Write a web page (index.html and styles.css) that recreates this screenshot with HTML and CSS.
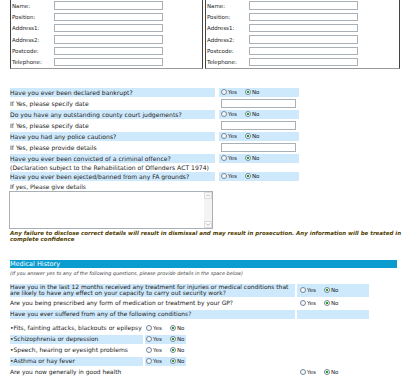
FILE: index.html
```html
<!DOCTYPE html>
<html lang="en">
<head>
    <meta charset="UTF-8">
    <meta name="viewport" content="width=device-width, initial-scale=1.0">
    <title>Steward Application</title>
    <link rel="stylesheet" href="styles.css">
</head>
<body>
    <div class="form">
        <div class="contacts">
            <div class="contact-box">
                <div class="field"><label>Name:</label><input type="text"></div>
                <div class="field"><label>Position:</label><input type="text"></div>
                <div class="field"><label>Address1:</label><input type="text"></div>
                <div class="field"><label>Address2:</label><input type="text"></div>
                <div class="field"><label>Postcode:</label><input type="text"></div>
                <div class="field"><label>Telephone:</label><input type="text"></div>
            </div>
            <div class="contact-box wide">
                <div class="field"><label>Name:</label><input type="text"></div>
                <div class="field"><label>Position:</label><input type="text"></div>
                <div class="field"><label>Address1:</label><input type="text"></div>
                <div class="field"><label>Address2:</label><input type="text"></div>
                <div class="field"><label>Postcode:</label><input type="text"></div>
                <div class="field"><label>Telephone:</label><input type="text"></div>
            </div>
        </div>

        <div class="questions">
            <div class="q shade">Have you ever been declared bankrupt?</div>
            <div class="a shade">
                <label class="choice"><input type="radio" name="bankrupt">Yes</label>
                <label class="choice"><input type="radio" name="bankrupt" checked>No</label>
            </div>
            <div class="q">If Yes, please specify date</div>
            <div class="a"><input type="text" class="short"></div>

            <div class="q shade">Do you have any outstanding county court judgements?</div>
            <div class="a shade">
                <label class="choice"><input type="radio" name="ccj">Yes</label>
                <label class="choice"><input type="radio" name="ccj" checked>No</label>
            </div>
            <div class="q">If Yes, please specify date</div>
            <div class="a"><input type="text" class="short"></div>

            <div class="q shade">Have you had any police cautions?</div>
            <div class="a shade">
                <label class="choice"><input type="radio" name="cautions">Yes</label>
                <label class="choice"><input type="radio" name="cautions" checked>No</label>
            </div>
            <div class="q">If Yes, please provide details</div>
            <div class="a"><input type="text" class="short"></div>

            <div class="q shade">Have you ever been convicted of a criminal offence?</div>
            <div class="a shade">
                <label class="choice"><input type="radio" name="convicted">Yes</label>
                <label class="choice"><input type="radio" name="convicted" checked>No</label>
            </div>
            <div class="q decl">(Declaration subject to the Rehabilitation of Offenders ACT 1974)</div>
            <div class="a decl"></div>

            <div class="q shade">Have you ever been ejected/banned from any FA grounds?</div>
            <div class="a shade">
                <label class="choice"><input type="radio" name="banned">Yes</label>
                <label class="choice"><input type="radio" name="banned" checked>No</label>
            </div>
        </div>

        <p class="details-label">If yes, Please give details</p>
        <div class="details-box">
            <textarea></textarea>
            <div class="scrollbar">
                <span class="arrow"><svg width="6" height="5" viewBox="0 0 6 5"><path d="M1 3.5 L3 1.5 L5 3.5" fill="none" stroke="#b5b5b5" stroke-width="1"/></svg></span>
                <span class="arrow"><svg width="6" height="5" viewBox="0 0 6 5"><path d="M1 1.5 L3 3.5 L5 1.5" fill="none" stroke="#b5b5b5" stroke-width="1"/></svg></span>
            </div>
        </div>

        <p class="warning">Any failure to disclose correct details will result in dismissal and may result in prosecution. Any information will be treated in complete confidence</p>

        <div class="section-head">Medical History</div>
        <p class="section-note">(If you answer yes to any of the following questions, please provide details in the space below)</p>

        <div class="medical">
            <div class="q shade">Have you in the last 12 months received any treatment for injuries or medical conditions that are likely to have any effect on your capacity to carry out security work?</div>
            <div class="a shade">
                <label class="choice"><input type="radio" name="treatment">Yes</label>
                <label class="choice"><input type="radio" name="treatment" checked>No</label>
            </div>
            <div class="q">Are you being prescribed any form of medication or treatment by your GP?</div>
            <div class="a">
                <label class="choice"><input type="radio" name="medication">Yes</label>
                <label class="choice"><input type="radio" name="medication" checked>No</label>
            </div>
            <div class="q shade">Have you ever suffered from any of the following conditions?</div>
            <div class="a shade"></div>

            <div class="conditions">
                <div class="q">&bull;Fits, fainting attacks, blackouts or epilepsy</div>
                <div class="a">
                    <label class="choice"><input type="radio" name="fits">Yes</label>
                    <label class="choice"><input type="radio" name="fits" checked>No</label>
                </div>
                <div class="q shade">&bull;Schizophrenia or depression</div>
                <div class="a shade">
                    <label class="choice"><input type="radio" name="schizo">Yes</label>
                    <label class="choice"><input type="radio" name="schizo" checked>No</label>
                </div>
                <div class="q">&bull;Speech, hearing or eyesight problems</div>
                <div class="a">
                    <label class="choice"><input type="radio" name="speech">Yes</label>
                    <label class="choice"><input type="radio" name="speech" checked>No</label>
                </div>
                <div class="q shade">&bull;Asthma or hay fever</div>
                <div class="a shade">
                    <label class="choice"><input type="radio" name="asthma">Yes</label>
                    <label class="choice"><input type="radio" name="asthma" checked>No</label>
                </div>
            </div>

            <div class="q">Are you now generally in good health</div>
            <div class="a">
                <label class="choice"><input type="radio" name="health">Yes</label>
                <label class="choice"><input type="radio" name="health" checked>No</label>
            </div>
        </div>
    </div>
</body>
</html>
```

FILE: styles.css
```css
body {
    margin: 0;
    background: #fff;
    color: #222;
    font-family: "DejaVu Sans", Verdana, sans-serif;
    font-size: 6px;
}
.form {
    padding-left: 10px;
    width: 396px;
}
input[type="text"], textarea {
    box-sizing: border-box;
    margin: 0;
    padding: 0;
    border: 1px solid #a9b0b6;
    background: #fff;
    font-size: 6px;
}

/* contact boxes */
.contacts {
    display: flex;
    gap: 2px;
    margin-top: -1px;
}
.contact-box {
    width: 193px;
    box-sizing: border-box;
    border: 1px solid #444;
    border-bottom-color: #999;
}
.contact-box.wide { width: 195px; }
.field {
    display: flex;
    align-items: center;
    height: 11.3px;
}
.field label {
    width: 43px;
    padding-left: 1px;
    box-sizing: border-box;
    font-size: 5.5px;
}
.field input {
    width: 109px;
    height: 8.5px;
}

/* question grids */
.questions {
    display: grid;
    grid-template-columns: 205px 80px;
    column-gap: 4px;
    row-gap: 2px;
    margin-top: 19px;
}
.q, .a {
    display: flex;
    align-items: center;
    min-height: 9px;
}
.q { font-size: 6.1px; }
.a { padding-left: 2px; }
.shade { background: #cfe9fc; }
.decl {
    min-height: 5px;
    height: 5px;
    line-height: 5px;
}
.short {
    width: 75px;
    height: 9px;
}
.choice {
    display: inline-flex;
    align-items: center;
    gap: 1px;
    margin-right: 8px;
    font-size: 5.5px;
}
.choice input {
    -webkit-appearance: none;
    appearance: none;
    width: 6px;
    height: 6px;
    margin: 0;
    box-sizing: border-box;
    border: 1px solid #7489a0;
    border-radius: 50%;
    background: #f7f7f7;
}
.choice input:checked {
    background: radial-gradient(circle, #22a022 0 1.1px, #f7f7f7 1.5px);
}

/* details */
.details-label {
    margin: 2px 0 1px;
    line-height: 7px;
}
.details-box {
    display: flex;
    width: 204px;
    height: 38px;
    margin-left: -1px;
    box-sizing: border-box;
    border: 1px solid #a9b0b6;
}
.details-box textarea {
    flex: 1;
    border: 0;
    resize: none;
}
.scrollbar {
    width: 8px;
    display: flex;
    flex-direction: column;
    justify-content: space-between;
    background: #f4f4f2;
}
.arrow {
    height: 7px;
    display: flex;
    align-items: center;
    justify-content: center;
    border: 1px solid #dcdcdc;
    box-sizing: border-box;
    background: #fbfbfb;
}
.warning {
    margin: 1px 0 0;
    font-size: 5.5px;
    font-weight: bold;
    font-style: italic;
    line-height: 6px;
    color: #4f4000;
}

/* medical */
.section-head {
    margin-top: 18px;
    width: 387px;
    height: 8px;
    line-height: 8px;
    background: #0b9ccf;
    color: #fff;
    font-size: 6.5px;
}
.section-note {
    margin: 2px 0 0;
    font-size: 4.9px;
    font-style: italic;
    line-height: 6px;
    color: #444;
}
.medical {
    display: grid;
    grid-template-columns: 285px 72px;
    column-gap: 2px;
    row-gap: 2px;
    margin-top: 8px;
}
.medical .q {
    font-size: 5.95px;
    line-height: 6.5px;
}
.medical .a { padding-left: 3px; }
.conditions {
    grid-column: 1 / -1;
    display: grid;
    grid-template-columns: 133px 41px;
    column-gap: 2px;
    row-gap: 2px;
    margin-top: 3px;
}
.conditions .q {
    font-size: 6px;
    white-space: nowrap;
}
.conditions .a { padding-left: 1px; }
```
